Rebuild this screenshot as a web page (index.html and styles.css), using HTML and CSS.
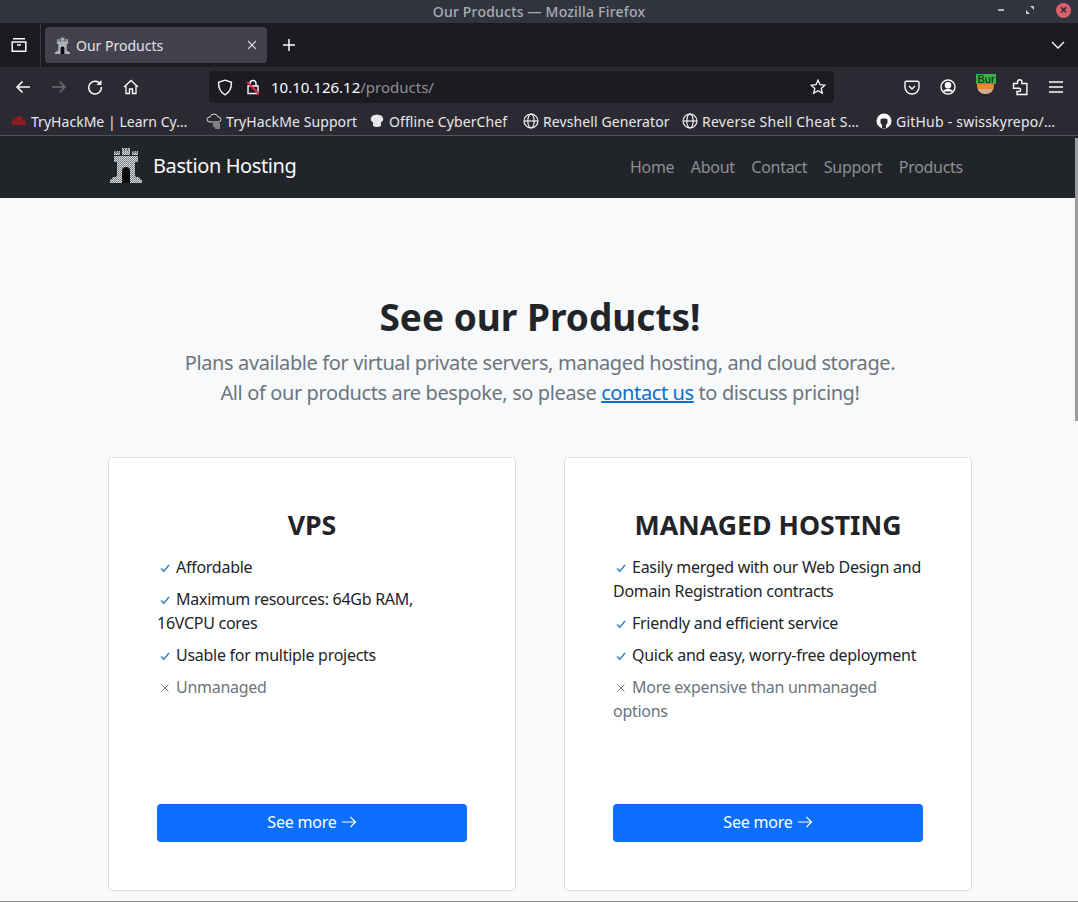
FILE: index.html
```html
<!DOCTYPE html>
<html lang="en">
<head>
<meta charset="utf-8">
<title>Our Products</title>
<link rel="stylesheet" href="styles.css">
</head>
<body>
<svg class="defs" width="0" height="0" aria-hidden="true">
  <defs>
    <pattern id="stone" width="2" height="2" patternUnits="userSpaceOnUse">
      <rect width="2" height="2" fill="#d2d5d6"/>
      <rect width="1" height="1" fill="#6f7375"/>
      <rect x="1" y="1" width="1" height="1" fill="#8d9193"/>
    </pattern>
    <symbol id="castle" viewBox="0 0 32 36">
      <path fill="url(#stone)" d="M4 4h1.500v2H6.500V4H8v2h.5V4H10v4H4zM12 1h2v3h.500V1h3v3h.500V1h2v7h-8zM22 4h1.500v2h1V4H26v2h.500V4H28v4h-6zM4 9h24v6h-3v13l1 2h3l1 2 2 1v3H0v-3l2-1 1-2h3l1-2V15H4z"/>
      <path fill="#0b0b0b" d="M12 36V24q0-4 4-4t4 4v12z"/>
    </symbol>
  </defs>
</svg>
<div class="window">
  <header class="titlebar">
    <span class="title-text">Our Products — Mozilla Firefox</span>
    <div class="win-controls">
      <span class="win-min"></span>
      <svg class="win-max" width="10" height="10" viewBox="0 0 10 10"><path d="M5 1h4v4zM1 5l4 4H1z" fill="#c8cacc"/></svg>
      <span class="win-close">×</span>
    </div>
  </header>

  <div class="tabbar">
    <div class="tab-view">
      <svg width="18" height="18" viewBox="0 0 18 18" fill="none" stroke="#fbfbfe" stroke-width="1.5"><path d="M3 2.800h12M2.200 6h13.600v9.200H2.200zM7 9h4"/></svg>
    </div>
    <div class="tab-sep"></div>
    <div class="tab">
      <svg class="tab-fav" width="15" height="17"><use href="#castle"/></svg>
      <span class="tab-title">Our Products</span>
      <svg class="tab-x" width="10" height="10" viewBox="0 0 10 10" stroke="#d8d8dc" stroke-width="1.100"><path d="M1 1l8 8M9 1l-8 8"/></svg>
    </div>
    <svg class="new-tab" width="14" height="14" viewBox="0 0 14 14" stroke="#fbfbfe" stroke-width="1.500"><path d="M7 1v12M1 7h12"/></svg>
    <svg class="tab-list" width="14" height="8" viewBox="0 0 14 8" fill="none" stroke="#fbfbfe" stroke-width="1.400"><path d="M1 1l6 6 6-6"/></svg>
  </div>

  <div class="navbar">
    <div class="nav-buttons">
      <svg width="16" height="14" viewBox="0 0 16 14" fill="none" stroke="#fbfbfe" stroke-width="1.600"><path d="M15 7H2M7.500 1.500L2 7l5.500 5.500"/></svg>
      <svg width="16" height="14" viewBox="0 0 16 14" fill="none" stroke="#6e6d74" stroke-width="1.500"><path d="M1 7h13M8.500 1.500L14 7l-5.500 5.500"/></svg>
      <svg width="16" height="16" viewBox="0 0 16 16" fill="none" stroke="#fbfbfe" stroke-width="1.500"><path d="M13.500 5.500A6.300 6.300 0 1 0 14.300 8"/><path d="M14.500 1v5h-5z" fill="#fbfbfe" stroke="none"/></svg>
      <svg width="16" height="16" viewBox="0 0 16 16" fill="none" stroke="#fbfbfe" stroke-width="1.300"><path d="M1 8l7-6.500L15 8M3 6.500v8h3.500V10h3v4.500H13v-8"/></svg>
    </div>
    <div class="urlbar">
      <svg width="16" height="17" viewBox="0 0 16 17" fill="none" stroke="#fbfbfe" stroke-width="1.400"><path d="M8 1.200l6.500 2.100c0 6-1.500 10-6.500 12.500C3 13.300 1.500 9.300 1.500 3.300z"/></svg>
      <svg class="lock" width="14" height="16" viewBox="0 0 14 16" fill="none"><path d="M4 7V4.500a3 3 0 0 1 6 0V7M2 7h10v7.500H2z" stroke="#fbfbfe" stroke-width="1.400"/><path d="M1 3l12 12" stroke="#e22850" stroke-width="2"/></svg>
      <span class="url"><span class="url-host">10.10.126.12</span>/products/</span>
      <svg class="star" width="16" height="16" viewBox="0 0 16 16" fill="none" stroke="#fbfbfe" stroke-width="1.300"><path d="M8 1.200l2 4.500 4.900.5-3.700 3.200 1.100 4.900L8 11.800l-4.300 2.500 1.100-4.900L1.100 6.200 6 5.700z"/></svg>
    </div>
    <div class="toolbar-right">
      <svg width="16" height="15" viewBox="0 0 16 15" fill="none" stroke="#fbfbfe" stroke-width="1.400"><path d="M2.500 1.200h11q1.500 0 1.500 1.500V7a7 7 0 0 1-14 0V2.700q0-1.500 1.500-1.500z"/><path d="M5 6l3 3 3-3"/></svg>
      <svg width="16" height="16" viewBox="0 0 16 16" fill="none" stroke="#fbfbfe" stroke-width="1.400"><circle cx="8" cy="8" r="7"/><circle cx="8" cy="6.200" r="2.600" fill="#fbfbfe"/><path d="M3.500 12.500q4.500-4 9 0" fill="#fbfbfe"/></svg>
      <div class="burp">
        <span class="burp-bowl"></span>
        <span class="burp-badge">Bur</span>
      </div>
      <svg width="16" height="17" viewBox="0 0 16 17" fill="none" stroke="#fbfbfe" stroke-width="1.400"><path d="M1.500 4.500h4V3a2.200 2.200 0 0 1 4.400 0v1.500h5v11H5v-3h2a1.600 1.600 0 0 0 0-3.200H1.500z"/></svg>
      <svg width="16" height="12" viewBox="0 0 16 12" stroke="#fbfbfe" stroke-width="1.500"><path d="M1 1h14M1 6h14M1 11h14"/></svg>
    </div>
  </div>

  <div class="bookmarks">
    <a class="bm bm-1"><svg width="16" height="14" viewBox="0 0 16 14"><path d="M3 11q-3-1-2-4 1-2 3-2 2-4 5-3 3 0 3 4 3 0 3 3t-3 2z" fill="#8c1d22"/></svg><span>TryHackMe | Learn Cy…</span></a>
    <a class="bm bm-2"><svg width="16" height="16" viewBox="0 0 16 16" fill="none" stroke="#d8d8dc" stroke-width="1"><path d="M4 9q-3 0-3-2.500T4 4q1-3 4-3t4 3q3 0 3 2.500T12 9z"/><path d="M7 11h7M7 13h7M9 15h5"/></svg><span>TryHackMe Support</span></a>
    <a class="bm bm-3"><svg width="16" height="16" viewBox="0 0 16 16"><path d="M4 9Q1 8 2 5t4-3q2-1 4 0 3 0 4 3t-2 4v4q-4 2-8 0z" fill="#e8e8ea"/></svg><span>Offline CyberChef</span></a>
    <a class="bm bm-4"><svg width="16" height="16" viewBox="0 0 16 16" fill="none" stroke="#fbfbfe" stroke-width="1.100"><circle cx="8" cy="8" r="7"/><ellipse cx="8" cy="8" rx="3.200" ry="7"/><path d="M1 8h14"/></svg><span>Revshell Generator</span></a>
    <a class="bm bm-5"><svg width="16" height="16" viewBox="0 0 16 16" fill="none" stroke="#fbfbfe" stroke-width="1.100"><circle cx="8" cy="8" r="7"/><ellipse cx="8" cy="8" rx="3.200" ry="7"/><path d="M1 8h14"/></svg><span>Reverse Shell Cheat S…</span></a>
    <a class="bm bm-6"><svg width="16" height="16" viewBox="0 0 16 16"><circle cx="8" cy="8" r="7.500" fill="#fbfbfe"/><path d="M6 15v-3L4.500 10V6.500L6 5.500h4l1.500 1V10L10 12v3z" fill="#2b2a33"/></svg><span>GitHub - swisskyrepo/…</span></a>
  </div>

  <div class="viewport">
    <div class="scroll-thumb"></div>
    <nav class="site-nav">
      <a class="brand">
        <svg width="32" height="36"><use href="#castle"/></svg>
        <span>Bastion Hosting</span>
      </a>
      <ul class="site-links">
        <li>Home</li>
        <li>About</li>
        <li>Contact</li>
        <li>Support</li>
        <li>Products</li>
      </ul>
    </nav>
    <main class="page">
      <section class="intro">
        <h1>See our Products!</h1>
        <p>Plans available for virtual private servers, managed hosting, and cloud storage.<br>All of our products are bespoke, so please <a href="#">contact us</a> to discuss pricing!</p>
      </section>
      <section class="cards">
        <article class="card">
          <h2>VPS</h2>
          <ul class="features">
            <li><svg class="ico" viewBox="0 0 10 10"><path class="tick" d="M1 5.500l2.800 2.700L9 2"/></svg>Affordable</li>
            <li><svg class="ico" viewBox="0 0 10 10"><path class="tick" d="M1 5.500l2.800 2.700L9 2"/></svg>Maximum resources: 64Gb RAM, 16VCPU cores</li>
            <li><svg class="ico" viewBox="0 0 10 10"><path class="tick" d="M1 5.500l2.800 2.700L9 2"/></svg>Usable for multiple projects</li>
            <li class="con"><svg class="ico" viewBox="0 0 10 10"><path class="cross" d="M1.500 1.500l7 7M8.500 1.500l-7 7"/></svg>Unmanaged</li>
          </ul>
          <a class="btn">See more <svg class="arrow" width="16" height="12" viewBox="0 0 16 12" fill="none" stroke="#fff" stroke-width="1.100"><path d="M1 6h13.500M9.500 1l5 5-5 5"/></svg></a>
        </article>
        <article class="card">
          <h2>MANAGED HOSTING</h2>
          <ul class="features">
            <li><svg class="ico" viewBox="0 0 10 10"><path class="tick" d="M1 5.500l2.800 2.700L9 2"/></svg>Easily merged with our Web Design and Domain Registration contracts</li>
            <li><svg class="ico" viewBox="0 0 10 10"><path class="tick" d="M1 5.500l2.800 2.700L9 2"/></svg>Friendly and efficient service</li>
            <li><svg class="ico" viewBox="0 0 10 10"><path class="tick" d="M1 5.500l2.800 2.700L9 2"/></svg>Quick and easy, worry-free deployment</li>
            <li class="con"><svg class="ico" viewBox="0 0 10 10"><path class="cross" d="M1.500 1.500l7 7M8.500 1.500l-7 7"/></svg>More expensive than unmanaged options</li>
          </ul>
          <a class="btn">See more <svg class="arrow" width="16" height="12" viewBox="0 0 16 12" fill="none" stroke="#fff" stroke-width="1.100"><path d="M1 6h13.500M9.500 1l5 5-5 5"/></svg></a>
        </article>
      </section>
    </main>
  </div>
</div>
</body>
</html>
```
FILE: styles.css
```css
* { box-sizing: border-box; }
html, body { margin: 0; padding: 0; height: 100%; overflow: hidden; }
body { font-family: "Noto Sans", "Open Sans", sans-serif; font-size: 16px; color: #212529; background: #f8f9fa; }
.defs { position: absolute; }
.window { height: 902px; display: flex; flex-direction: column; border-bottom: 1px solid #8a8a8a; overflow: hidden; }

.titlebar { height: 23px; flex: none; background: #31343f; position: relative; display: flex; align-items: center; justify-content: center; }
.title-text { font-size: 14px; font-weight: 500; color: #a9adb5; letter-spacing: 0.2px; }
.win-controls { position: absolute; right: 7px; top: 3px; display: flex; align-items: center; gap: 21px; height: 14px; }
.win-min { width: 6px; height: 2px; background: #b4b6bb; }
.win-max { display: block; }
.win-close { width: 15px; height: 15px; border-radius: 50%; background: #d9606b; color: #3a2a30; font-size: 14px; font-weight: 700; line-height: 14px; text-align: center; }

.tabbar { height: 44px; flex: none; background: #1c1b22; display: flex; align-items: center; }
.tab-view { width: 40px; display: flex; justify-content: center; padding-right: 2px; }
.tab-sep { width: 1px; height: 44px; background: #3a3940; }
.tab { width: 222px; height: 36px; margin-left: 4px; background: #42414d; border-radius: 4px; display: flex; align-items: center; padding: 0 10px; }
.tab-fav { flex: none; margin-right: 6px; }
.tab-title { flex: 1; font-size: 14px; color: #e3e3e6; }
.new-tab { margin-left: 15px; }
.tab-list { margin-left: auto; margin-right: 13px; }

.navbar { height: 40px; flex: none; background: #2b2a33; display: flex; align-items: center; }
.nav-buttons { width: 209px; display: flex; align-items: center; gap: 20px; padding-left: 15px; flex: none; }
.urlbar { width: 625px; height: 32px; flex: none; background: #1c1b22; border-radius: 4px; display: flex; align-items: center; padding: 0 8px; }
.lock { margin-left: 13px; }
.url { margin-left: 11px; font-size: 15px; color: #8f8f94; flex: 1; }
.url-host { color: #fbfbfe; }
.toolbar-right { flex: 1; display: flex; align-items: center; gap: 20px; padding-left: 70px; }
.burp { position: relative; width: 16px; height: 18px; flex: none; }
.burp-bowl { position: absolute; left: 1px; top: 5px; width: 17px; height: 11px; border-radius: 2px 2px 8px 8px; background: linear-gradient(#e8892f 50%, #cfae8c 55%); }
.burp-badge { position: absolute; left: 0; top: -4px; width: 20px; height: 10px; background: #35b34a; color: #10210f; font-family: "Liberation Sans", sans-serif; font-size: 11px; line-height: 10px; text-align: center; }

.bookmarks { height: 29px; flex: none; background: #2b2a33; border-bottom: 1px solid #54535b; display: flex; align-items: center; position: relative; padding-left: 11px; }
.bm { display: flex; align-items: center; gap: 4px; font-size: 14px; color: #e8e8ec; white-space: nowrap; flex: none; letter-spacing: 0.1px; }
.bm svg { flex: none; }
.bm-1 { width: 195px; letter-spacing: 0.03px; }
.bm-2 { width: 163px; }
.bm-3 { width: 154px; }
.bm-4 { width: 159px; }
.bm-5 { width: 194px; letter-spacing: 0.27px; }
.bm-6 { letter-spacing: 0.22px; }

.viewport { flex: 1; position: relative; overflow: hidden; }
.scroll-thumb { position: absolute; right: 0; top: 2px; width: 3px; height: 283px; background: #9a9b9d; z-index: 2; }

.site-nav { height: 62px; background: #212529; display: flex; align-items: center; padding: 0 115px 0 110px; }
.brand { display: flex; align-items: center; gap: 11px; color: #f8f9fa; font-size: 20px; letter-spacing: -0.4px; }
.brand span { margin-bottom: 4px; }
.brand svg { display: block; margin-bottom: 5px; }
.site-links { list-style: none; margin: 0 0 0 auto; padding: 0; display: flex; gap: 16.500px; color: #8b9095; font-size: 16px; letter-spacing: -0.28px; }

.page { padding: 95px 106px 0 108px; }
.intro { text-align: center; margin-bottom: 49px; }
.intro h1 { margin: 0 0 8px; font-size: 37px; line-height: 47px; font-weight: 700; color: #212529; }
.intro p { margin: 0; font-size: 20px; line-height: 30px; color: #6c757d; letter-spacing: -0.39px; }
.intro a { color: #0a6ed0; text-decoration: underline; }

.cards { display: grid; grid-template-columns: 408px 408px; gap: 48px; }
.card { height: 434px; background: #fff; border: 1px solid #dcdfe2; border-radius: 4px; padding: 48px; display: flex; flex-direction: column; }
.card h2 { margin: 0 0 11px; text-align: center; font-size: 26.700px; line-height: 38px; font-weight: 700; color: #212529; }
.features { list-style: none; margin: 0; padding: 0; letter-spacing: -0.27px; }
.features li { line-height: 24px; margin-bottom: 8px; }
.features .con { color: #6c757d; }
.ico { width: 10px; height: 10px; margin: 0 6px 0 3px; }
.tick { fill: none; stroke: #2d7fc4; stroke-width: 1.500; }
.cross { fill: none; stroke: #6c757d; stroke-width: 1; }
.btn { margin-top: auto; height: 38px; padding-bottom: 2px; background: #0d6efd; color: #fff; border-radius: 4px; display: flex; align-items: center; justify-content: center; gap: 4px; letter-spacing: -0.2px; }
.arrow { display: block; }
```
